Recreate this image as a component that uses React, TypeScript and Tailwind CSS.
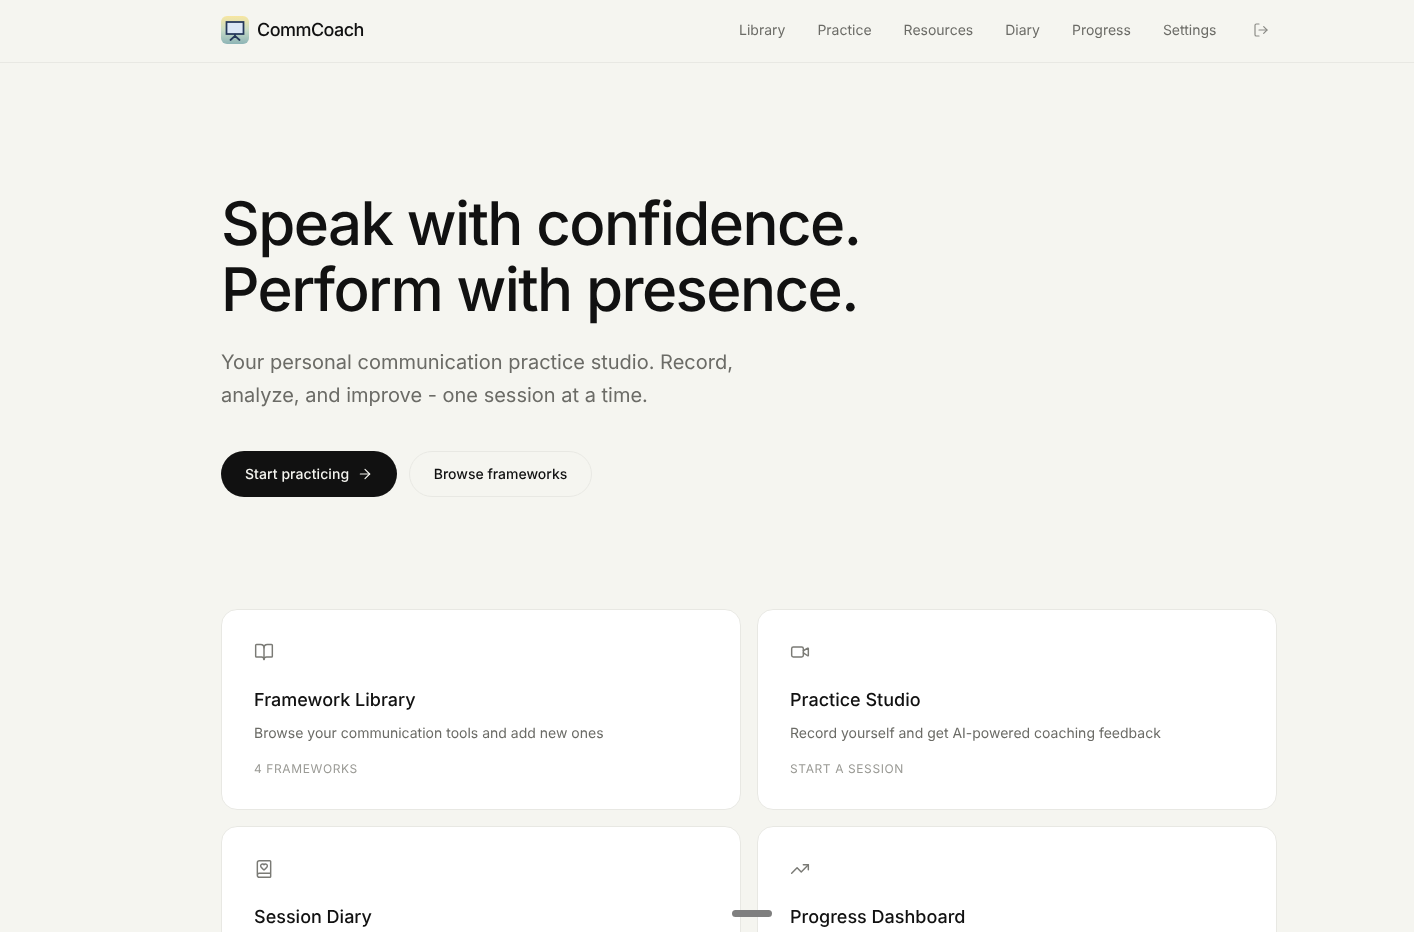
import { ArrowRight, BookHeart, BookOpen, LogOut, TrendingUp, Video } from "lucide-react";

const navLinks = ["Library", "Practice", "Resources", "Diary", "Progress", "Settings"];

const cards = [
  {
    icon: BookOpen,
    title: "Framework Library",
    text: "Browse your communication tools and add new ones",
    meta: "4 FRAMEWORKS",
  },
  {
    icon: Video,
    title: "Practice Studio",
    text: "Record yourself and get AI-powered coaching feedback",
    meta: "START A SESSION",
  },
  {
    icon: BookHeart,
    title: "Session Diary",
    text: "Reflect on your sessions and track what you learn",
    meta: "0 ENTRIES",
  },
  {
    icon: TrendingUp,
    title: "Progress Dashboard",
    text: "See how your skills develop over time",
    meta: "VIEW STATS",
  },
];

function Logo() {
  return (
    <div className="flex h-7 w-7 items-center justify-center rounded-md bg-gradient-to-b from-[#f7e6a0] via-[#c8dcc6] to-[#8db4b6]">
      <svg width="22" height="22" viewBox="0 0 22 22" fill="none">
        <rect x="2.5" y="3" width="17" height="12" fill="#dbe7f6" stroke="#24375a" strokeWidth="1.75" />
        <path d="M11 15.5v1.5M11 16.8 6.5 21M11 16.8l4.5 4.2" stroke="#24375a" strokeWidth="1.75" strokeLinecap="round" />
      </svg>
    </div>
  );
}

export default function App() {
  return (
    <div className="relative min-h-screen bg-[#f5f5f0] font-['Inter',sans-serif] text-[#111111] [font-optical-sizing:none] [text-rendering:geometricPrecision]">
      <header className="transform-gpu border-b border-[#e8e8e3]">
        <nav className="ml-[221px] flex h-[62px] w-[1056px] items-center justify-between pb-[2px]">
          <div className="flex items-center gap-2">
            <Logo />
            <span className="pt-[2px] text-lg font-medium tracking-[-0.03em]">CommCoach</span>
          </div>
          <div className="flex items-center gap-8 text-sm text-[#6b6b66]">
            {navLinks.map((link) => (
              <a key={link} className="pt-[2px]">
                {link}
              </a>
            ))}
            <span className="-ml-[3.5px] p-2">
              <LogOut size={16} strokeWidth={1.75} className="text-[#8a8a85]" />
            </span>
          </div>
        </nav>
      </header>

      <main className="ml-[221px] w-[1056px] transform-gpu pb-8">
        <section className="pt-[128px]">
          <h1 className="text-[60px] leading-[66px] font-medium tracking-[-0.0265em]">
            Speak with confidence.
            <br />
            Perform with presence.
          </h1>
          <p className="mt-[23px] w-[560px] text-xl leading-[33px] text-[#6b6b66]">
            Your personal communication practice studio. Record, analyze, and improve - one session at a time.
          </p>
          <div className="mt-[39px] flex gap-3">
            <a className="flex h-[46px] w-[176px] items-center gap-2 rounded-full bg-[#111111] pl-6 text-sm font-medium tracking-[0.005em] text-[#f5f5f0]">
              <span className="pt-[2px]">Start practicing</span>
              <ArrowRight size={16} strokeWidth={1.75} />
            </a>
            <a className="flex h-[46px] w-[183px] items-center justify-center rounded-full border border-[#e8e8e3] text-sm font-medium">
              <span className="pt-[2px]">Browse frameworks</span>
            </a>
          </div>
        </section>

        <section className="mt-[112px] grid grid-cols-2 gap-4">
          {cards.map((card) => (
            <div key={card.title} className="h-[201px] rounded-2xl border border-[#e8e8e3] bg-white p-8">
              <card.icon size={20} strokeWidth={1.75} className="text-[#7a7a75]" />
              <h2 className="mt-[25px] text-lg leading-7 font-medium">{card.title}</h2>
              <p className="mt-[9px] text-sm leading-5 text-[#6b6b66]">{card.text}</p>
              <p className="mt-[17px] text-xs leading-4 tracking-[0.05em] text-[#9a9a95]">{card.meta}</p>
            </div>
          ))}
        </section>
      </main>

      <div className="fixed bottom-[15px] left-[732px] h-[7px] w-10 rounded-full bg-[#7f7f7f]" />
    </div>
  );
}
